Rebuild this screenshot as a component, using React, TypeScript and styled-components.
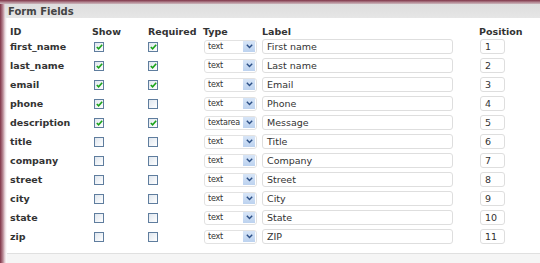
import styled, { createGlobalStyle } from 'styled-components';

const GlobalStyle = createGlobalStyle`
  html, body {
    margin: 0;
    padding: 0;
    background: #ffffff;
  }
  body {
    font-family: 'DejaVu Sans', Verdana, sans-serif;
    color: #333;
  }
`;

const Frame = styled.div`
  width: 540px;
  height: 263px;
  display: flex;
  flex-direction: column;
  overflow: hidden;
  background: linear-gradient(to right, #7e3346 0px, #b98a96 3px, #eadbdf 5px, #ffffff 7px);
`;

const TopBar = styled.div`
  height: 4px;
  background: linear-gradient(to bottom, #7e3346, #b48a95 60%, #cbb7bc);
`;

const Header = styled.div`
  height: 14px;
  margin-left: 5px;
  padding-left: 3px;
  display: flex;
  align-items: center;
  background: linear-gradient(to bottom, #dedede, #e6e6e6);
  font-size: 10px;
  font-weight: bold;
  color: #444;
`;

const Table = styled.div`
  margin-left: 10px;
  padding-top: 7px;
  display: flex;
  flex-direction: column;
  flex: 1;
`;

const Row = styled.div<{ $h?: number }>`
  display: grid;
  grid-template-columns: 82px 56px 55px 59px 217px 1fr;
  height: ${(p) => p.$h ?? 19}px;
  align-items: center;
`;

const HeadCell = styled.div`
  font-size: 9.5px;
  font-weight: bold;
  color: #333;
`;

const IdCell = styled.div`
  font-size: 9.5px;
  font-weight: bold;
  color: #333;
`;

const Cell = styled.div<{ $pad?: number }>`
  display: flex;
  align-items: center;
  padding-left: ${(p) => p.$pad ?? 0}px;
`;

const Box = styled.span`
  width: 8px;
  height: 8px;
  border: 1px solid #5f7d9e;
  background: linear-gradient(135deg, #dfe6ee, #ffffff);
  display: flex;
  align-items: center;
  justify-content: center;
`;

const Select = styled.div`
  width: 53px;
  height: 14px;
  border: 1px solid #e2e2e2;
  border-radius: 3px;
  display: flex;
  align-items: center;
  justify-content: space-between;
  padding: 0 1px 0 3px;
  box-sizing: border-box;
  font-size: 8px;
  letter-spacing: -0.2px;
  color: #333;
  background: #fff;
`;

const Arrow = styled.span`
  width: 12px;
  height: 11px;
  flex-shrink: 0;
  background: linear-gradient(to bottom, #d7e5f7, #bcd2ef);
  display: flex;
  align-items: center;
  justify-content: center;
`;

const TextInput = styled.div<{ $w: number }>`
  width: ${(p) => p.$w}px;
  height: 15px;
  box-sizing: border-box;
  border: 1px solid #dedede;
  border-radius: 3px;
  padding-left: 4px;
  display: flex;
  align-items: center;
  font-size: 9.5px;
  color: #333;
  background: #fff;
`;

const Footer = styled.div`
  height: 9px;
  margin-left: 7px;
  border-top: 1px solid #e0e0e0;
  background: #f5f5f5;
`;

function Check({ on }: { on: boolean }) {
  return (
    <Box>
      {on && (
        <svg width='7' height='6' viewBox='0 0 7 6'>
          <path d='M0.8 3 L2.6 4.8 L6.2 0.8' stroke='#1aa31a' strokeWidth='1.6' fill='none' />
        </svg>
      )}
    </Box>
  );
}

interface IField {
  id: string;
  show: boolean;
  required: boolean;
  type: string;
  label: string;
}

const fields: IField[] = [
  { id: 'first_name', show: true, required: true, type: 'text', label: 'First name' },
  { id: 'last_name', show: true, required: true, type: 'text', label: 'Last name' },
  { id: 'email', show: true, required: true, type: 'text', label: 'Email' },
  { id: 'phone', show: true, required: false, type: 'text', label: 'Phone' },
  { id: 'description', show: true, required: true, type: 'textarea', label: 'Message' },
  { id: 'title', show: false, required: false, type: 'text', label: 'Title' },
  { id: 'company', show: false, required: false, type: 'text', label: 'Company' },
  { id: 'street', show: false, required: false, type: 'text', label: 'Street' },
  { id: 'city', show: false, required: false, type: 'text', label: 'City' },
  { id: 'state', show: false, required: false, type: 'text', label: 'State' },
  { id: 'zip', show: false, required: false, type: 'text', label: 'ZIP' },
];

function App() {
  return (
    <Frame>
      <GlobalStyle />
      <TopBar />
      <Header>Form Fields</Header>
      <Table>
        <Row $h={12}>
          <HeadCell>ID</HeadCell>
          <HeadCell>Show</HeadCell>
          <HeadCell>Required</HeadCell>
          <HeadCell>Type</HeadCell>
          <HeadCell>Label</HeadCell>
          <HeadCell>Position</HeadCell>
        </Row>
        {fields.map((f, i) => (
          <Row key={f.id}>
            <IdCell>{f.id}</IdCell>
            <Cell $pad={2}>
              <Check on={f.show} />
            </Cell>
            <Cell>
              <Check on={f.required} />
            </Cell>
            <Cell $pad={1}>
              <Select>
                <span>{f.type}</span>
                <Arrow>
                  <svg width='7' height='5' viewBox='0 0 7 5'>
                    <path d='M0.8 0.8 L3.5 3.6 L6.2 0.8' stroke='#2b4f86' strokeWidth='1.4' fill='none' />
                  </svg>
                </Arrow>
              </Select>
            </Cell>
            <Cell>
              <TextInput $w={191}>{f.label}</TextInput>
            </Cell>
            <Cell $pad={1}>
              <TextInput $w={25}>{i + 1}</TextInput>
            </Cell>
          </Row>
        ))}
      </Table>
      <Footer />
    </Frame>
  );
}

export default App;
